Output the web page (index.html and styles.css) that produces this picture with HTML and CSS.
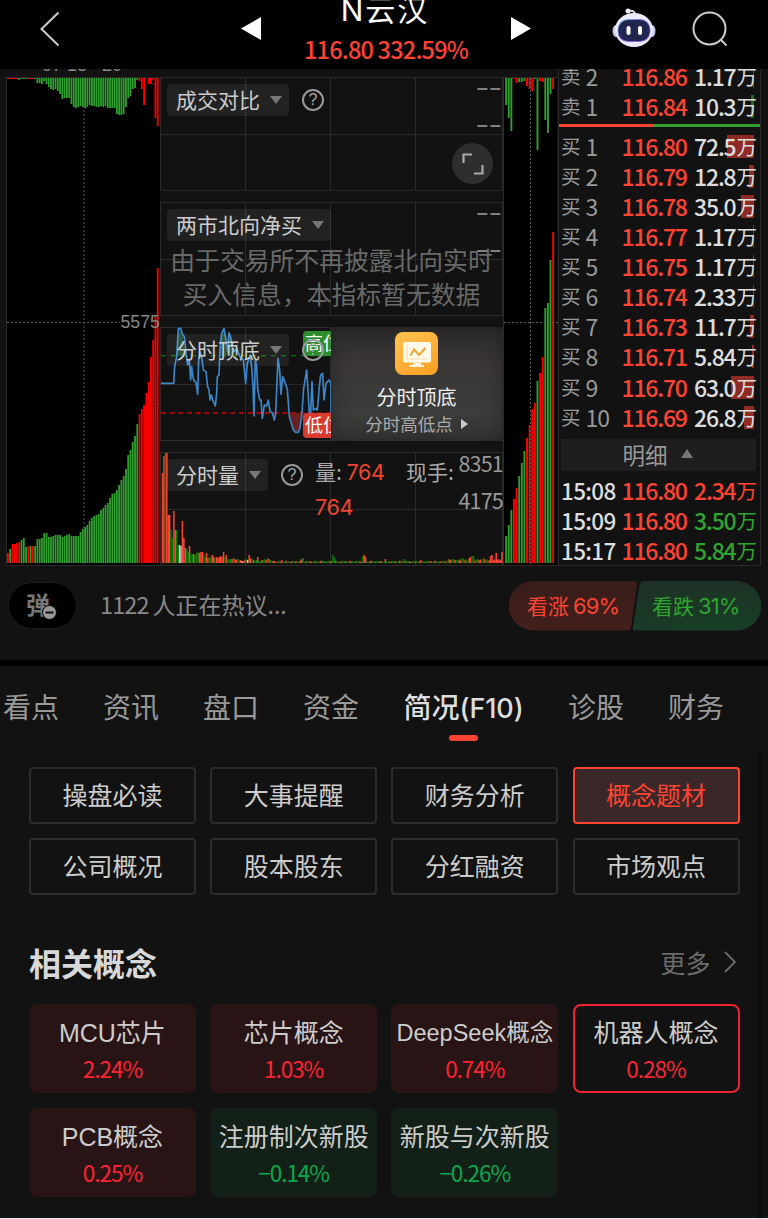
FILE: index.html
```html
<!DOCTYPE html>
<html lang="zh-CN">
<head>
<meta charset="UTF-8">
<meta name="viewport" content="width=device-width, initial-scale=1.0">
<title>N云汉 116.80</title>
<link rel="stylesheet" href="styles.css">
</head>
<body>
<div class="page">
  <header class="header">
    <svg class="back" width="20" height="36" viewBox="0 0 20 36"><path d="M18.5 1.5 1.5 18l17 16.5" fill="none" stroke="#ccc" stroke-width="2"/></svg>
    <svg class="arrow" width="20" height="23" viewBox="0 0 20 23"><path d="M20 0v23L0 11.5z" fill="#fff"/></svg>
    <div class="stock">
      <div class="stock-name">N云汉</div>
      <div class="stock-price">116.80 332.59%</div>
    </div>
    <svg class="arrow" width="20" height="23" viewBox="0 0 20 23"><path d="M0 0v23l20-11.5z" fill="#fff"/></svg>
    <svg class="robot" width="44" height="40" viewBox="0 0 44 40">
      <defs>
        <linearGradient id="visor" x1="0" y1="0" x2="1" y2="1">
          <stop offset="0" stop-color="#7fd0ea"/><stop offset=".45" stop-color="#7a5fd8"/><stop offset="1" stop-color="#8f6bf0"/>
        </linearGradient>
      </defs>
      <path d="M16 3c4-1 7 0 7 4" fill="none" stroke="#dcdcf2" stroke-width="2"/>
      <circle cx="16" cy="3" r="2.5" fill="#ecebfa"/>
      <ellipse cx="4" cy="23" rx="3.5" ry="6" fill="#c9c8ee"/>
      <ellipse cx="40" cy="23" rx="3.5" ry="6" fill="#c9c8ee"/>
      <ellipse cx="22" cy="22" rx="19" ry="17" fill="#ececf8"/>
      <rect x="5.500" y="11" width="33" height="23" rx="10.500" fill="url(#visor)"/>
      <rect x="6.500" y="12" width="31" height="21" rx="9.500" fill="#20264d"/>
      <rect x="14.500" y="18" width="4" height="9" rx="2" fill="#fff"/>
      <rect x="26" y="18" width="4" height="9" rx="2" fill="#fff"/>
    </svg>
    <svg class="search" width="37" height="37" viewBox="0 0 37 37"><g fill="none" stroke="#ccc" stroke-width="2"><circle cx="17.500" cy="17.500" r="16"/><path d="m28.500 28.500 6 6"/></g></svg>
  </header>

  <section class="market">
    <div class="depth depth-left">
      <div class="clipped">07 18 –20</div>
      <div class="depth-chart">
        <svg id="depth-left" width="153" height="488"></svg>
        <span class="depth-label">5575</span>
      </div>
    </div>

    <div class="panels">
      <div class="panel">
        <div class="panel-bar"><span class="picker">成交对比<i></i></span><span class="help">?</span></div>
        <div class="scale"><span>––</span><span>––</span></div>
        <span class="expand"><svg width="22" height="22" viewBox="0 0 22 22"><path d="M1.500 10V1.500H10M20.500 12v8.500H12" fill="none" stroke="#aaa" stroke-width="2.200"/></svg></span>
      </div>
      <div class="panel">
        <div class="panel-bar"><span class="picker">两市北向净买<i></i></span></div>
        <div class="scale"><span>––</span><span>––</span></div>
        <p class="notice">由于交易所不再披露北向实时<br>买入信息，本指标暂无数据</p>
      </div>
      <div class="panel">
        <svg class="trend" width="342" height="114" viewBox="33 21 1026 342">
          <path d="M80 107 85 25h7l5 17 10 65zM210 107l5-67 7-15 6 35 5 35 4-57 6 17 7 52z" fill="#214a2c"/>
          <path d="m416 279 8 31 6 20 7 7h8l5-15 6-43zM367 279l6 21 4-21z" fill="#69201f"/>
          <path d="M33 107h510" stroke="#007c00" stroke-width="4" stroke-dasharray="15 15"/>
          <path d="M33 279h510" stroke="#d40000" stroke-width="5" stroke-dasharray="15 11"/>
          <path d="M33 190 71 190 74 140 80 110 85 25 92 25 97 42 103 50 108 100 113 135 118 120 122 180 125 140 128 165 131 180 138 188 143 223 146 120 150 95 155 110 160 150 168 155 173 200 177 210 180 240 184 225 190 245 196 258 200 220 202 170 207 165 210 90 215 40 222 25 228 60 233 95 237 38 243 55 247 80 253 95 260 85 270 110 280 120 287 190 292 130 300 105 305 140 309 200 312 288 316 120 320 140 323 205 329 240 333 240 337 295 343 255 350 258 355 240 360 275 367 278 373 300 377 280 384 115 389 150 393 223 398 170 404 185 412 208 418 290 424 310 430 330 437 337 445 337 450 322 455 290 461 205 470 150 475 230 478 285 482 280 486 185 490 270 496 265 502 270 508 200 512 165 518 160 522 240 528 190 537 180 543 190V290" fill="none" stroke="#3a86c8" stroke-width="5" stroke-linejoin="round"/>
        </svg>
        <span class="tag tag-high">高位</span>
        <span class="tag tag-low">低位</span>
        <div class="panel-bar"><span class="picker">分时顶底<i></i></span><span class="help">?</span></div>
        <div class="promo">
          <svg width="43" height="43" viewBox="0 0 43 43">
            <defs><linearGradient id="gold" x1="0" y1="0" x2="0.600" y2="1"><stop offset="0" stop-color="#ffc34d"/><stop offset="1" stop-color="#fba42c"/></linearGradient></defs>
            <rect width="43" height="43" rx="8" fill="url(#gold)"/>
            <rect x="8" y="10" width="28" height="20.500" rx="2" fill="#fff9ec"/>
            <path d="M18 30.500h8V33h3v2H14.500v-2H18z" fill="#fff3dc"/>
            <path d="M12 13v14h20" fill="none" stroke="#fbe3ba" stroke-width="1.500"/>
            <path d="m15.500 23.500 3.500-6 5 5.500 6.500-7" fill="none" stroke="#f5a62f" stroke-width="2"/>
          </svg>
          <div class="promo-title">分时顶底</div>
          <div class="promo-sub">分时高低点<i></i></div>
        </div>
      </div>
      <div class="panel">
        <svg class="trend" id="volume" width="342" height="114"></svg>
        <div class="panel-bar"><span class="picker">分时量<i></i></span><span class="help">?</span></div>
        <div class="figures">
          <div class="vol">量: <b>764</b><br><b>764</b></div>
          <div class="hand">现手:</div>
        </div>
        <div class="scale scale-num"><span>8351</span><span>4175</span></div>
      </div>
    </div>

    <div class="depth depth-right">
      <div class="depth-chart"><svg id="depth-right" width="54" height="488"></svg></div>
    </div>

    <div class="book">
      <div class="row"><span>卖<em>2</em></span><b>116.86</b><strong class="ask">1.17<u>万</u><i style="width:1px"></i></strong></div>
      <div class="row"><span>卖<em>1</em></span><b>116.84</b><strong class="ask">10.3<u>万</u><i style="width:3px"></i></strong></div>
      <div class="ratio"><i></i></div>
      <div class="row"><span>买<em>1</em></span><b>116.80</b><strong>72.5<u>万</u><i style="width:27px"></i></strong></div>
      <div class="row"><span>买<em>2</em></span><b>116.79</b><strong>12.8<u>万</u><i style="width:5px"></i></strong></div>
      <div class="row"><span>买<em>3</em></span><b>116.78</b><strong>35.0<u>万</u><i style="width:13px"></i></strong></div>
      <div class="row"><span>买<em>4</em></span><b>116.77</b><strong>1.17<u>万</u><i style="width:1px"></i></strong></div>
      <div class="row"><span>买<em>5</em></span><b>116.75</b><strong>1.17<u>万</u><i style="width:1px"></i></strong></div>
      <div class="row"><span>买<em>6</em></span><b>116.74</b><strong>2.33<u>万</u><i style="width:1px"></i></strong></div>
      <div class="row"><span>买<em>7</em></span><b>116.73</b><strong>11.7<u>万</u><i style="width:4px"></i></strong></div>
      <div class="row"><span>买<em>8</em></span><b>116.71</b><strong>5.84<u>万</u><i style="width:2px"></i></strong></div>
      <div class="row"><span>买<em>9</em></span><b>116.70</b><strong>63.0<u>万</u><i style="width:23px"></i></strong></div>
      <div class="row"><span>买<em>10</em></span><b>116.69</b><strong>26.8<u>万</u><i style="width:10px"></i></strong></div>
      <div class="detail">明细<i></i></div>
      <div class="row tick"><span>15:08</span><b>116.80</b><strong class="up">2.34<u>万</u></strong></div>
      <div class="row tick"><span>15:09</span><b>116.80</b><strong class="down">3.50<u>万</u></strong></div>
      <div class="row tick"><span>15:17</span><b>116.80</b><strong class="down">5.84<u>万</u></strong></div>
    </div>
  </section>

  <section class="chat">
    <div class="danmu">弹<svg width="15" height="15" viewBox="0 0 15 15"><circle cx="7.500" cy="7.500" r="7" fill="#999" stroke="#000"/><path d="M3.500 7.500h8" stroke="#111" stroke-width="2"/></svg></div>
    <div class="talk"><em>1122</em>人正在热议...</div>
    <div class="votes">
      <svg width="252" height="50" viewBox="0 0 252 50">
        <defs>
          <linearGradient id="bull" x1="0" y1="0" x2="0" y2="1"><stop offset="0" stop-color="#381d1a"/><stop offset="1" stop-color="#43201c"/></linearGradient>
          <linearGradient id="bear" x1="0" y1="0" x2="0.300" y2="1"><stop offset="0" stop-color="#1e3024"/><stop offset="1" stop-color="#193d27"/></linearGradient>
        </defs>
        <path d="M24.500 0H125q3.500 0 3 3.500l-6 43q-.5 3-4 3H24.500a24.500 24.500 0 0 1 0-49.500z" fill="url(#bull)"/>
        <path d="M135 0h92.500a24.500 24.500 0 0 1 0 49.500H127q-3.500 0-3-3l6.500-43q.5-3.500 4.500-3.500z" fill="url(#bear)"/>
      </svg>
      <span class="vote up">看涨<em>69%</em></span>
      <span class="vote down">看跌<em>31%</em></span>
    </div>
  </section>

  <nav class="tabs">
    <a>看点</a><a>资讯</a><a>盘口</a><a>资金</a><a class="active"><span>简况<em>(F10)</em></span></a><a>诊股</a><a>财务</a>
  </nav>

  <main class="content">
    <div class="grid menu">
      <a>操盘必读</a><a>大事提醒</a><a>财务分析</a><a class="active">概念题材</a>
      <a>公司概况</a><a>股本股东</a><a>分红融资</a><a>市场观点</a>
    </div>
    <div class="heading">
      <h2>相关概念</h2>
      <a class="more">更多<svg width="12" height="22" viewBox="0 0 12 22"><path d="m1 1 10 10L1 21" fill="none" stroke="#6b6b6b" stroke-width="1.800"/></svg></a>
    </div>
    <div class="grid concepts">
      <div class="card"><span>MCU芯片</span><b>2.24%</b></div>
      <div class="card"><span>芯片概念</span><b>1.03%</b></div>
      <div class="card"><span class="long">DeepSeek概念</span><b>0.74%</b></div>
      <div class="card picked"><span>机器人概念</span><b>0.28%</b></div>
      <div class="card"><span>PCB概念</span><b>0.25%</b></div>
      <div class="card fall"><span>注册制次新股</span><b>−0.14%</b></div>
      <div class="card fall"><span>新股与次新股</span><b>−0.26%</b></div>
    </div>
    <div class="scrollbar"></div>
  </main>
</div>

<script>
  const RED = '#f00', GREEN = '#2f9f2f';

  function rect(x, y, w, h, fill) {
    return `<rect x="${x.toFixed(2)}" y="${y}" width="${w}" height="${h}" fill="${fill}"/>`;
  }

  // Order depth: asks hang from the top edge, bids grow from the bottom edge
  function drawDepth(id, opt) {
    let out = '';
    opt.top.forEach((h, i) => {
      if (h) out += rect(opt.start + i * opt.pitch, 0, opt.bar, h, opt.topRed.includes(i) ? RED : GREEN);
    });
    opt.bottom.forEach((h, i) => {
      out += rect(opt.start + i * opt.pitch, 485 - h, opt.bar, h, opt.bottomRed.includes(i) ? RED : GREEN);
    });
    out += `<path d="M${opt.midX} 0V488M0 244.5H${opt.lineTo}" stroke="#5c5c5c" stroke-dasharray="2 2"/>`;
    document.getElementById(id).innerHTML = out;
  }

  drawDepth('depth-left', {
    start: 0, pitch: 2.27, bar: 1.8, midX: 77, lineTo: 113,
    top: [1,1,1,1,1,2,1,1,1,1,1,1,1,5,5,6,3,6,9,11,12,11,13,16,21,20,20,20,26,29,30,29,28,29,30,29,27,28,28,29,29,28,29,28,30,30,30,30,36,37,37,36,29,20,18,11,10,2,3,11,27,0,6,6,2,40,48],
    topRed: [0,1,2,3,4,9,10,11,58,59,60,62,63,64,65,66],
    bottom: [10,14,19,19,20,21,23,25,16,17,17,17,17,24,24,25,30,30,26,26,27,28,28,28,26,27,28,29,27,27,27,27,31,34,36,38,42,45,47,48,49,53,55,58,60,65,69,70,73,78,83,87,94,108,113,121,127,139,149,154,158,170,181,206,223,246,295],
    bottomRed: [0,2,3,4,5,9,11,58,59,60,61,62,63,64,65,66]
  });
  drawDepth('depth-right', {
    start: 1.2, pitch: 2.61, bar: 1.9, midX: 26.5, lineTo: 54,
    top: [27,40,53,1,5,4,4,3,8,11,13,1,72,3,4,42,55,16,11],
    topRed: [3,4,8,9,10,13,14,18],
    bottom: [27,38,53,64,75,87,100,112,125,138,154,160,182,190,206,255,260,303,331],
    bottomRed: [3,4,8,9,10,11,13,14,18]
  });

  // Minute volume, r = up, g = down, w = flat
  const volume = 'r90 r107 g110 r110 r48 r48 g33 g25 r52 r33 g33 g18 w18 w17 r42 r25 r15 g14 g11 r17 g9 g9 r9 g8 g10 g11 r10 r11 r11 g9 g6 r10 r5 g6 g5 r8 r6 g5 r6 r5 r6 r7 r6 r11 g6 r8 g4 g3 g4 r4 g5 r4 r3 g4 g3 r3 w2 r2 r3 g4 w3 r8 r5 g4 r3 g2 g3 r6 g2 g2 r3 g3 g4 r3 g5 r4 g3 g2 r2 r2'.split(' ');
  const bumps = {84: 3, 98: 4, 99: 5, 113: 2, 120: 8, 121: 5, 141: 7, 142: 8, 143: 6, 152: 2, 157: 4, 170: 4, 182: 3, 205: 4, 206: 3, 207: 3, 211: 5, 216: 5, 217: 6, 218: 7, 219: 7, 226: 5, 231: 7, 232: 8, 235: 10, 239: 11};
  for (let i = volume.length; i < 240; i++) {
    const h = bumps[i] || 1 + (i * 7 % 5) / 3 + (i > 200 ? 1.5 : 0);
    const c = (i * 5 % 7 < 3 || i === 142 || i > 230) ? 'r' : 'g';
    volume.push(c + h.toFixed(1));
  }
  const tone = {r: '#fb4434', g: '#008000', w: '#ccc'};
  document.getElementById('volume').innerHTML = volume.map((v, i) => {
    const h = Number(v.slice(1));
    return rect(0.8 + i * 1.42, 111 - h, 1.5, h, tone[v[0]]);
  }).join('');
</script>
</body>
</html>
```
FILE: styles.css
```css
* {
  box-sizing: border-box;
}
body {
  margin: 0;
  background: #121212;
  color: #ccc;
  font-family: "Noto Sans CJK SC", sans-serif;
}
em, i, u {
  font-style: normal;
  text-decoration: none;
}
.page {
  width: 768px;
  height: 1219px;
  overflow: hidden;
  border-bottom: 1px solid #eee;
}

/* header */
.header {
  display: grid;
  grid-template-columns: 201px 20px 250px 20px 81px 44px 36px 37px;
  align-items: start;
  height: 69px;
  padding-left: 40px;
  background: #000;
  overflow: hidden;
}
.back {
  margin-top: 11px;
}
.arrow {
  margin-top: 17px;
}
.robot {
  grid-column: 6;
  margin-top: 8px;
}
.search {
  grid-column: 8;
  margin-top: 11px;
}
.stock {
  margin-top: -7px;
  text-align: center;
  white-space: nowrap;
}
.stock-name {
  height: 36px;
  padding-right: 2px;
  font: 30px/34px Inter, "Noto Sans CJK SC", sans-serif;
  letter-spacing: 2px;
  color: #fff;
}
.stock-price {
  font: 500 23.5px/40px "Noto Sans CJK SC", sans-serif;
  letter-spacing: -0.8px;
  color: #ff4332;
}

/* charts */
.market {
  display: flex;
  height: 497px;
  padding-left: 6px;
  overflow: hidden;
}
.depth {
  display: flex;
  flex-direction: column;
  justify-content: flex-end;
}
.depth-left {
  width: 154px;
}
.clipped {
  display: flex;
  align-items: flex-end;
  height: 8px;
  padding: 0 0 2px 36px;
  font: 18px/20px "Liberation Sans", sans-serif;
  color: #888;
  overflow: hidden;
}
.depth-chart {
  position: relative;
  height: 489px;
  background: #000;
  border: 1px solid #2a2a2a;
  border-right: 0;
}
.depth-chart svg {
  display: block;
}
.depth-label {
  position: absolute;
  right: 0;
  top: 234px;
  font: 17.8px/20px "Liberation Sans", sans-serif;
  color: #888;
}
.panels {
  display: flex;
  flex-direction: column;
  gap: 11px;
  width: 343px;
  padding-top: 8px;
}
.panel {
  position: relative;
  height: 114px;
  flex: none;
  border: 1px solid #2a2a2a;
  background:
    linear-gradient(#2a2a2a, #2a2a2a) 0 56px / 100% 1px no-repeat,
    linear-gradient(#2a2a2a, #2a2a2a) 84px 0 / 1px 100% no-repeat,
    linear-gradient(#2a2a2a, #2a2a2a) 169px 0 / 1px 100% no-repeat,
    linear-gradient(#2a2a2a, #2a2a2a) 254px 0 / 1px 100% no-repeat;
}
.trend {
  position: absolute;
  left: 0;
  top: -1px;
}
.panel-bar {
  position: relative;
  display: flex;
  align-items: center;
  gap: 13px;
  padding: 6px 0 0 6px;
}
.picker {
  display: flex;
  align-items: center;
  height: 32px;
  padding: 0 7px 2px 9px;
  border-radius: 4px;
  background: rgba(255, 255, 255, 0.07);
  font-size: 21px;
}
.picker i {
  margin: 2px 0 0 10px;
  border: 6px solid transparent;
  border-top: 8px solid #777;
  border-bottom: 0;
}
.help {
  width: 22px;
  height: 22px;
  border: 2px solid #999;
  border-radius: 50%;
  font: 16px/18px "Liberation Sans", sans-serif;
  text-align: center;
  color: #aaa;
}
.scale {
  position: absolute;
  right: 0;
  top: -1px;
  display: flex;
  flex-direction: column;
  gap: 17px;
  font: bold 20px/20px "Liberation Sans", sans-serif;
  letter-spacing: 2px;
  color: #808080;
}
.scale span {
  margin-right: -1px;
}
.scale-num {
  top: 0;
  font: 21.5px/20px "Noto Sans CJK SC", sans-serif;
  letter-spacing: -0.8px;
  color: #999;
}
.expand {
  position: absolute;
  left: 291px;
  top: 65px;
  display: grid;
  place-items: center;
  width: 41px;
  height: 41px;
  border-radius: 50%;
  background: #2e2e2e;
}
.notice {
  margin: 1px 0 0;
  font-size: 24.8px;
  line-height: 34px;
  text-align: center;
  white-space: nowrap;
  color: #696969;
}
.tag {
  position: absolute;
  left: 142px;
  width: 30px;
  height: 25px;
  padding-left: 2px;
  border-radius: 4px;
  overflow: hidden;
  font-size: 18px;
  line-height: 23px;
  white-space: nowrap;
  color: #fff;
}
.tag-high {
  top: 3px;
  background: #2c8d2c;
}
.tag-low {
  top: 85px;
  background: #d83a2d;
}
.promo {
  position: absolute;
  left: 170px;
  top: -1px;
  display: flex;
  flex-direction: column;
  align-items: center;
  width: 171px;
  height: 114px;
  padding-top: 5px;
  background: linear-gradient(#2d2b2c, #3b3737 35%, #3a3d3a 75%, #353535);
  box-shadow: inset 0 0 18px rgba(20, 20, 20, 0.5);
}
.promo-title {
  margin-top: 8px;
  font-size: 20px;
  line-height: 27px;
  color: #eee;
}
.promo-sub {
  display: flex;
  align-items: center;
  gap: 8px;
  font-size: 17.5px;
  line-height: 27px;
  color: #aaa;
}
.promo-sub i {
  border: 5px solid transparent;
  border-left: 7px solid #ccc;
  border-right: 0;
}
.figures {
  position: absolute;
  left: 154px;
  top: 1px;
  display: flex;
  gap: 17px;
  font-size: 21px;
  line-height: 34px;
  color: #aaa;
}
.figures b {
  font-family: Inter, sans-serif;
  font-weight: 400;
  font-size: 21.5px;
  letter-spacing: -0.3px;
  color: #f2432f;
}
.vol {
  width: 74px;
}
.depth-right {
  width: 55px;
}
.depth-right .depth-chart {
  margin-right: 1px;
}

/* order book */
.book {
  display: flex;
  flex-direction: column;
  justify-content: flex-end;
  width: 203px;
  padding: 0 4px 0 2px;
  border: solid #2a2a2a;
  border-width: 0 1px 1px;
}
.row {
  flex: none;
  display: flex;
  align-items: center;
  height: 30.1px;
  white-space: nowrap;
}
.row span {
  display: flex;
  align-items: center;
  width: 60.5px;
  font-size: 19.5px;
  line-height: 28px;
  color: #999;
}
.row em {
  margin-left: 5px;
  font: 23px/28px "Noto Sans CJK SC", sans-serif;
  letter-spacing: -1px;
}
.row b {
  width: 70px;
  font: 500 23px/28px "Noto Sans CJK SC", sans-serif;
  letter-spacing: -1.2px;
  color: #ff4332;
}
.row strong {
  position: relative;
  z-index: 0;
  flex: 1;
  display: flex;
  justify-content: flex-end;
  align-items: center;
  margin-right: -1px;
  font: 500 23px/28px "Noto Sans CJK SC", sans-serif;
  letter-spacing: -1.2px;
  color: #ddd;
}
.row u {
  margin-left: 1px;
  font: 20.5px/28px "Noto Sans CJK SC", sans-serif;
  letter-spacing: 0;
}
.row strong i {
  position: absolute;
  z-index: -1;
  right: 3px;
  top: 3px;
  height: 23px;
  background: #8f2b25;
}
.row .ask i {
  background: #1d6b25;
}
.row.tick span {
  font: 500 22.5px/28px "Noto Sans CJK SC", sans-serif;
  letter-spacing: -0.7px;
  color: #ddd;
}
.row strong.up, .up {
  color: #ff4332;
}
.row strong.down, .down {
  color: #2fa52f;
}
.ratio {
  flex: none;
  height: 3px;
  margin: 3px -4px 4px -2px;
  background: #2fa02f;
}
.ratio i {
  display: block;
  width: 47%;
  height: 3px;
  background: #ff4332;
}
.detail {
  flex: none;
  display: flex;
  align-items: center;
  justify-content: center;
  gap: 13px;
  height: 32px;
  margin: 7px 0 4px;
  padding: 0 2px 2px 0;
  background: #1e1e1e;
  font-size: 22.5px;
  color: #999;
}
.detail i {
  border: 6px solid transparent;
  border-top: 0;
  border-bottom: 9px solid #777;
}

/* chat strip */
.chat {
  display: flex;
  align-items: center;
  height: 94px;
  padding: 0 7px 15px 8px;
}
.danmu {
  display: flex;
  align-items: center;
  justify-content: center;
  width: 69px;
  height: 47px;
  padding: 0 2px 5px 0;
  border: 1px solid #1c1c1c;
  border-radius: 24px;
  background: #000;
  font-size: 24px;
  font-weight: 700;
  color: #777;
}
.danmu svg {
  margin: 18px 0 0 -8px;
}
.talk {
  margin: -3px 0 0 23px;
  font-size: 23px;
  white-space: nowrap;
  color: #888;
}
.talk em {
  margin-right: 4px;
  font-size: 23.5px;
  letter-spacing: -0.9px;
}
.votes {
  position: relative;
  display: flex;
  width: 252px;
  height: 50px;
  margin-left: auto;
}
.votes svg {
  position: absolute;
}
.vote {
  position: relative;
  width: 126px;
  padding-left: 18px;
  font-size: 21px;
  line-height: 48px;
  white-space: nowrap;
}
.vote.down {
  padding-left: 17px;
}
.vote em {
  margin-left: 4px;
  font: 22px/48px Inter, sans-serif;
  letter-spacing: -0.9px;
}

/* tabs */
.tabs {
  display: flex;
  gap: 44px;
  height: 90px;
  padding: 19px 0 0 3px;
  border-top: 6px solid #000;
  font-size: 28px;
  line-height: 42px;
  white-space: nowrap;
  color: #999;
}
.tabs .active {
  display: flex;
  flex-direction: column;
  align-items: center;
  width: 121px;
  font-weight: 500;
  color: #ddd;
}
.tabs em {
  font-family: Inter, sans-serif;
  font-size: 27px;
  letter-spacing: -0.1px;
}
.tabs .active::after {
  content: "";
  width: 29px;
  height: 6px;
  margin-top: 5px;
  border-radius: 3px;
  background: #ff4332;
}

/* F10 content */
.content {
  position: relative;
  height: 468px;
  padding: 17px 28.500px 0 29px;
}
.grid {
  display: grid;
  grid-template-columns: repeat(4, 1fr);
  gap: 14.4px;
}
.menu a {
  height: 57px;
  border: 2px solid #2c2c2c;
  border-radius: 4px;
  font-size: 25px;
  line-height: 51px;
  text-align: center;
}
.menu .active {
  border-color: #ff4332;
  background: #3a2829;
  color: #ff4332;
}
.heading {
  display: flex;
  align-items: center;
  justify-content: space-between;
  height: 48px;
  margin: 43px 4px 18px 0;
}
.heading h2 {
  margin: 0;
  font-size: 32px;
  line-height: 46px;
  color: #d8d8d8;
}
.more {
  display: flex;
  align-items: center;
  gap: 13px;
  font-size: 25px;
  color: #6b6b6b;
}
.card {
  display: flex;
  flex-direction: column;
  align-items: center;
  height: 89px;
  padding-top: 11px;
  border-radius: 8px;
  background: #291415;
  font: 25px/36px "Liberation Sans", "Noto Sans CJK SC", sans-serif;
  white-space: nowrap;
}
.card .long {
  font-size: 23.5px;
}
.card b {
  font: 22.5px/34px "Noto Sans CJK SC", sans-serif;
  letter-spacing: -1px;
  color: #ff2233;
}
.card.fall {
  background: #122018;
}
.card.fall b {
  color: #09a84a;
}
.card.picked {
  padding-top: 9px;
  border: 2px solid #ef2233;
  background: none;
}
.scrollbar {
  position: absolute;
  right: 5px;
  top: 0;
  width: 6px;
  height: 100%;
  border-radius: 3px 3px 0 0;
  background: #0d0d0d;
}
```
